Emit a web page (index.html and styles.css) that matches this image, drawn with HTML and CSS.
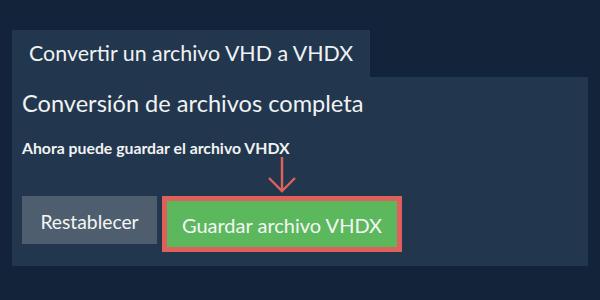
FILE: index.html
```html
<!DOCTYPE html>
<html lang="es">
<head>
<meta charset="utf-8">
<link rel="stylesheet" href="styles.css">
</head>
<body>
<div class="wrap">
  <div class="tab">Convertir un archivo VHD a VHDX</div>
  <div class="panel">
    <h1 class="title">Conversión de archivos completa</h1>
    <p class="note">Ahora puede guardar el archivo VHDX</p>
    <div class="actions">
      <button class="btn reset">Restablecer</button>
      <div class="save-wrap">
        <svg class="arrow" width="30" height="38" viewBox="0 0 30 38">
          <path d="M15 0 V35 M2 21 L15 34 L28 21" fill="none" stroke="#e0605c" stroke-width="2.4"/>
        </svg>
        <button class="btn save">Guardar archivo VHDX</button>
      </div>
    </div>
  </div>
</div>
</body>
</html>
```
FILE: styles.css
```css
html, body {
  margin: 0;
  padding: 0;
  background: #12233a;
  width: 600px;
  height: 300px;
  overflow: hidden;
  font-family: Lato, "Liberation Sans", sans-serif;
  color: #f0f2f4;
}
.wrap {
  padding: 30px 12px 0 12px;
}
.tab {
  display: inline-block;
  background: #22374e;
  font-size: 21.4px;
  line-height: 47px;
  height: 47px;
  padding: 0 17px;
  box-sizing: border-box;
  width: 358px;
  white-space: nowrap;
}
.panel {
  background: #22374e;
  height: 189px;
  padding: 0 10px;
  box-sizing: border-box;
  width: 576px;
  overflow: hidden;
}
.title {
  margin: 0;
  font-weight: 400;
  font-size: 23.6px;
  line-height: 28px;
  padding-top: 12px;
  white-space: nowrap;
}
.note {
  margin: 0;
  font-weight: 700;
  font-size: 15.8px;
  line-height: 20px;
  padding-top: 21px;
  white-space: nowrap;
}
.actions {
  display: flex;
  align-items: flex-start;
  margin-top: -1px;
}
.btn {
  font-family: Lato, "Liberation Sans", sans-serif;
  color: #f4f6f7;
  border: none;
  margin: 0;
  cursor: pointer;
  white-space: nowrap;
}
.reset {
  margin-top: 39px;
  background: #4e5e6e;
  width: 135px;
  height: 48px;
  padding: 2px 0 0 0;
  font-size: 19.3px;
}
.save-wrap {
  margin-left: 5px;
  display: flex;
  flex-direction: column;
  align-items: center;
}
.arrow {
  display: block;
}
.save {
  margin-top: 1px;
  background: #5cb85c;
  border: 5px solid #de5f5b;
  width: 240px;
  height: 56px;
  padding: 2px 0 0 0;
  font-size: 20px;
}
```
